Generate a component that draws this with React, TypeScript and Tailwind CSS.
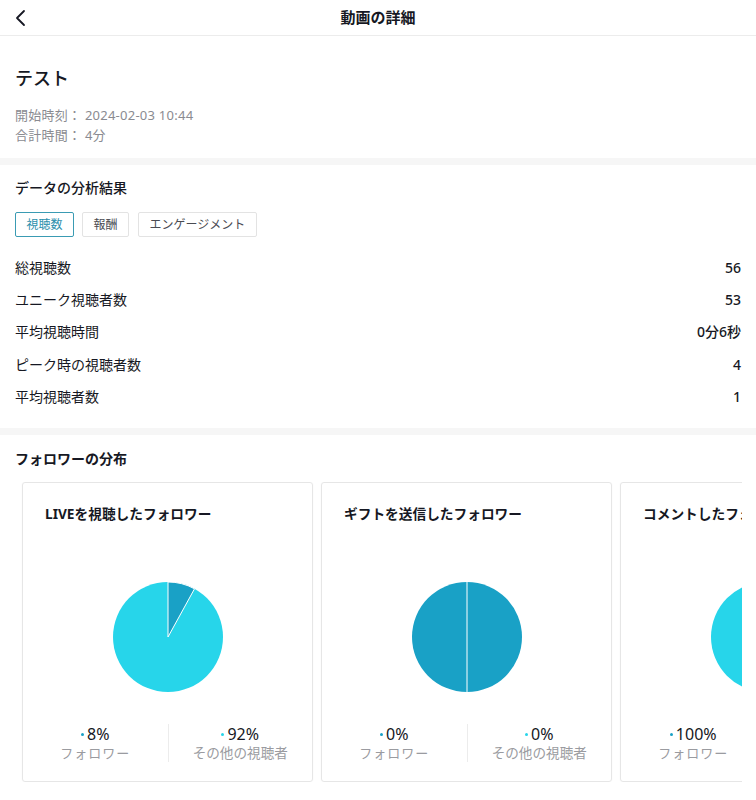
const font = { fontFamily: '"Noto Sans", "Noto Sans CJK JP", sans-serif' };

const DARK = '#19a1c6';
const LIGHT = '#27d5ea';

const stats = [
  { label: '総視聴数', value: '56' },
  { label: 'ユニーク視聴者数', value: '53' },
  { label: '平均視聴時間', value: '0分6秒' },
  { label: 'ピーク時の視聴者数', value: '4' },
  { label: '平均視聴者数', value: '1' },
];

function Pie({ kind }: { kind: 'part' | 'half' | 'full' }) {
  return (
    <svg width="112" height="112" viewBox="0 0 112 112">
      {kind === 'part' && (
        <>
          <circle cx="56" cy="56" r="55" fill={LIGHT} />
          <path d="M56 56 L56 1 A55 55 0 0 1 82.5 7.8 Z" fill={DARK} stroke="#fff" strokeWidth="1" strokeLinejoin="round" />
        </>
      )}
      {kind === 'half' && (
        <>
          <circle cx="56" cy="56" r="55" fill={DARK} />
          <line x1="56" y1="1" x2="56" y2="111" stroke="#fff" strokeWidth="1" />
        </>
      )}
      {kind === 'full' && <circle cx="56" cy="56" r="55" fill={LIGHT} />}
    </svg>
  );
}

const cards = [
  { title: 'LIVEを視聴したフォロワー', kind: 'part' as const, a: '8%', b: '92%' },
  { title: 'ギフトを送信したフォロワー', kind: 'half' as const, a: '0%', b: '0%' },
  { title: 'コメントしたフォロワー', kind: 'full' as const, a: '100%', b: '0%' },
];

export default function App() {
  return (
    <div className="w-[756px] h-[800px] overflow-hidden bg-white text-[#161823]" style={font}>
      {/* Header */}
      <div className="relative flex h-9 items-center justify-center border-b border-[#ececec]">
        <svg className="absolute left-[14px] top-[9px]" width="14" height="18" viewBox="0 0 14 18">
          <polyline points="10,2 3,9 10,16" fill="none" stroke="#161823" strokeWidth="1.8" strokeLinecap="round" strokeLinejoin="round" />
        </svg>
        <span className="text-[15px] font-bold">動画の詳細</span>
      </div>

      {/* Summary */}
      <div className="px-[15px] pt-[29px] pb-[13px]">
        <h1 className="text-[18px] leading-[26px] font-medium">テスト</h1>
        <div className="mt-[14px] text-[13px] leading-[20px] tracking-[0.25px] text-[#8a8b91]">
          <p>開始時刻： 2024-02-03 10:44</p>
          <p>合計時間： 4分</p>
        </div>
      </div>
      <div className="h-[7px] bg-[#f6f6f6]" />

      {/* Analysis */}
      <div className="px-[15px] pt-[13px] pb-[16px]">
        <h2 className="text-[14px] leading-[20px] font-medium">データの分析結果</h2>
        <div className="mt-[14px] flex gap-2 text-[12px]">
          <span className="flex h-[25px] w-[59px] items-center justify-center rounded-[2px] border border-[#3a9bb3] text-[#2c8fac]">視聴数</span>
          <span className="flex h-[25px] w-[47px] items-center justify-center rounded-[2px] border border-[#e3e3e3] text-[#4a4b52]">報酬</span>
          <span className="ml-px flex h-[25px] w-[119px] items-center justify-center rounded-[2px] border border-[#e3e3e3] text-[#4a4b52]">エンゲージメント</span>
        </div>
        <div className="mt-[14px]">
          {stats.map((s) => (
            <div key={s.label} className="flex h-[32.3px] items-center justify-between text-[14px]">
              <span>{s.label}</span>
              <span className="font-medium">{s.value}</span>
            </div>
          ))}
        </div>
      </div>
      <div className="h-[7px] bg-[#f6f6f6]" />

      {/* Followers */}
      <div className="pt-[14px] pl-[15px] pr-[14px]">
        <h2 className="text-[14px] leading-[20px] font-bold">フォロワーの分布</h2>
        <div className="mt-[13px] flex gap-2 overflow-hidden pl-[7px]">
          {cards.map((c) => (
            <div key={c.title} className="flex h-[300px] w-[291px] flex-none flex-col rounded-[3px] border border-[#e6e6e6] shadow-[0_0_2px_rgba(0,0,0,0.04)]">
              <div className="pl-[22px] pt-[22px] text-[13.7px] leading-[18px] font-bold whitespace-nowrap">{c.title}</div>
              <div className="mt-[58px] flex justify-center">
                <Pie kind={c.kind} />
              </div>
              <div className="mt-[31px] grid grid-cols-2">
                <div className="flex flex-col items-center">
                  <span className="flex items-center text-[16px] leading-[20px]">
                    <span className="mr-[3px] h-[3px] w-[3px] rounded-full" style={{ backgroundColor: DARK }} />
                    {c.a}
                  </span>
                  <span className="text-[13px] leading-[18px] tracking-[1px] text-[#9a9ba0]">フォロワー</span>
                </div>
                <div className="flex flex-col items-center border-l border-[#ececec]">
                  <span className="flex items-center text-[16px] leading-[20px]">
                    <span className="mr-[3px] h-[3px] w-[3px] rounded-full" style={{ backgroundColor: LIGHT }} />
                    {c.b}
                  </span>
                  <span className="text-[13.6px] leading-[18px] text-[#9a9ba0]">その他の視聴者</span>
                </div>
              </div>
            </div>
          ))}
        </div>
      </div>
    </div>
  );
}
